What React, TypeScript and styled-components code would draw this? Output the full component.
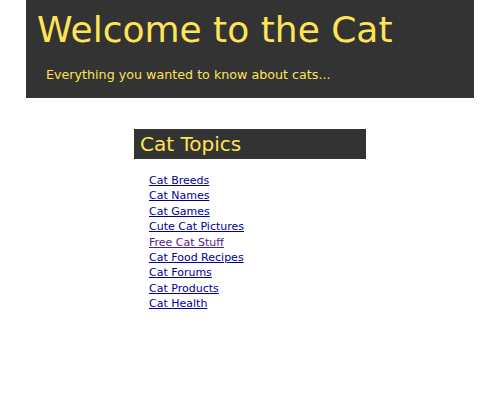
import React from "react";
import styled, { createGlobalStyle } from "styled-components";

const Global = createGlobalStyle`
  html, body { margin: 0; padding: 0; background: #ffffff; }
  body { font-family: "DejaVu Sans", Verdana, sans-serif; }
`;

const Page = styled.div`
  width: 500px;
  display: flex;
  flex-direction: column;
  align-items: center;
`;

const Header = styled.header`
  width: 448px;
  height: 98px;
  background: #333333;
  box-sizing: border-box;
  padding: 8px 0 0 11px;
`;

const Title = styled.h1`
  margin: 0;
  font-size: 36px;
  font-weight: normal;
  color: #ffe455;
  line-height: 44px;
`;

const Subtitle = styled.p`
  margin: 15px 0 0 9px;
  font-size: 12.7px;
  color: #ffe455;
  line-height: 16px;
`;

const Sidebar = styled.section`
  width: 232px;
  margin-top: 31px;
`;

const SectionTitle = styled.h2`
  margin: 0;
  height: 30px;
  background: #333333;
  color: #ffe455;
  font-size: 20px;
  font-weight: normal;
  line-height: 30px;
  padding-left: 6px;
`;

const LinkList = styled.ul`
  list-style: none;
  margin: 14px 0 0 0;
  padding: 0 0 0 15px;
  display: flex;
  flex-direction: column;
`;

const Item = styled.li`
  font-size: 11px;
  line-height: 15.4px;
`;

const Link = styled.a<{ $visited?: boolean }>`
  color: ${(p) => (p.$visited ? "#551a8b" : "#000099")};
  text-decoration: underline;
`;

const topics = [
  "Cat Breeds",
  "Cat Names",
  "Cat Games",
  "Cute Cat Pictures",
  "Free Cat Stuff",
  "Cat Food Recipes",
  "Cat Forums",
  "Cat Products",
  "Cat Health",
];

export default function App() {
  return (
    <>
      <Global />
      <Page>
        <Header>
          <Title>Welcome to the Cat</Title>
          <Subtitle>Everything you wanted to know about cats...</Subtitle>
        </Header>
        <Sidebar>
          <SectionTitle>Cat Topics</SectionTitle>
          <LinkList>
            {topics.map((t) => (
              <Item key={t}>
                <Link href="#" $visited={t === "Free Cat Stuff"}>
                  {t}
                </Link>
              </Item>
            ))}
          </LinkList>
        </Sidebar>
      </Page>
    </>
  );
}
